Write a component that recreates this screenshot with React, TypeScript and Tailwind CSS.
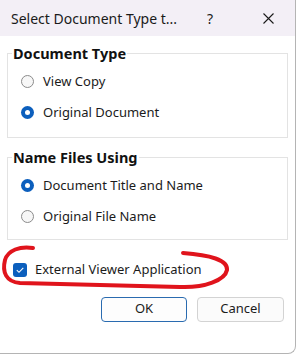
import React from 'react';

const Radio = ({ checked, label }: { checked?: boolean; label: string }) => (
	<div className="flex h-[31px] items-center">
		<span
			className={
				checked
					? 'flex h-[13px] w-[13px] items-center justify-center rounded-full bg-[#0c5fbd]'
					: 'h-[13px] w-[13px] rounded-full border border-[#8b8b8b] bg-[#f7f7f7]'
			}
		>
			{checked && <span className="h-[5px] w-[5px] rounded-full bg-white" />}
		</span>
		<span className="ml-[9px] text-[13px] text-[#1b1b1b]">{label}</span>
	</div>
);

const Group = ({ title, children, className }: { title: string; children: React.ReactNode; className?: string }) => (
	<fieldset className={'border border-[#e3e3e3] px-[13px] ' + (className ?? '')}>
		<legend className="-ml-[9px] px-[1px] text-[14.5px] font-bold leading-[18px] text-[#111]">{title}</legend>
		{children}
	</fieldset>
);

export default function App() {
	return (
		<div className="relative h-[355px] w-[297px] bg-white" style={{ fontFamily: '"Noto Sans", "Open Sans", sans-serif' }}>
			<div className="flex h-[354px] w-[296px] flex-col overflow-hidden rounded-br-[8px] border-r border-b border-[#b4b4b4] bg-white">
				<div className="flex h-9 shrink-0 items-center bg-[#f3eff6] pl-[11px] text-[14px] text-[#1a1a1a]">
					<span>Select Document Type t...</span>
					<span className="ml-[30px]">?</span>
					<svg className="ml-[50px]" width="11" height="11" viewBox="0 0 11 11">
						<path d="M0.5 0.5 L10.5 10.5 M10.5 0.5 L0.5 10.5" stroke="#1a1a1a" strokeWidth="1.1" />
					</svg>
				</div>
				<div className="flex flex-col px-[7px] pt-[8px]">
					<Group title="Document Type" className="pt-[4px] pb-[9px]">
						<Radio label="View Copy" />
						<Radio checked label="Original Document" />
					</Group>
					<Group title="Name Files Using" className="mt-[10px] pt-[4px] pb-[7px]">
						<Radio checked label="Document Title and Name" />
						<Radio label="Original File Name" />
					</Group>
					<div className="mt-[20px] flex items-center pl-[6px]">
						<span className="flex h-[14px] w-[14px] items-center justify-center rounded-[3px] bg-[#0c5fbd]">
							<svg width="10" height="10" viewBox="0 0 10 10">
								<path d="M1.8 5.2 L4 7.3 L8.3 2.8" fill="none" stroke="white" strokeWidth="1.1" />
							</svg>
						</span>
						<span className="ml-[8px] text-[13px] text-[#1b1b1b]">External Viewer Application</span>
					</div>
					<div className="mt-[17px] flex justify-end gap-[10px] pr-[4px]">
						<button className="h-[25px] w-[86px] rounded-[4px] border border-[#2a6bb0] bg-[#fdfdfd] text-[13px] text-[#1b1b1b]">
							OK
						</button>
						<button className="h-[25px] w-[87px] rounded-[4px] border border-[#d3d3d3] bg-[#fbfbfb] text-[13px] text-[#1b1b1b]">
							Cancel
						</button>
					</div>
				</div>
			</div>
			<svg className="absolute left-0 top-[240px]" width="240" height="55" viewBox="0 0 240 55">
				<path
					d="M33,8 C20,6 8,10 5,20 C2,32 6,42 20,43 L180,47 C205,48 225,40 227,30 C228,20 210,15 183,13"
					fill="none"
					stroke="#e0141c"
					strokeWidth="4"
					strokeLinecap="round"
				/>
			</svg>
		</div>
	);
}
